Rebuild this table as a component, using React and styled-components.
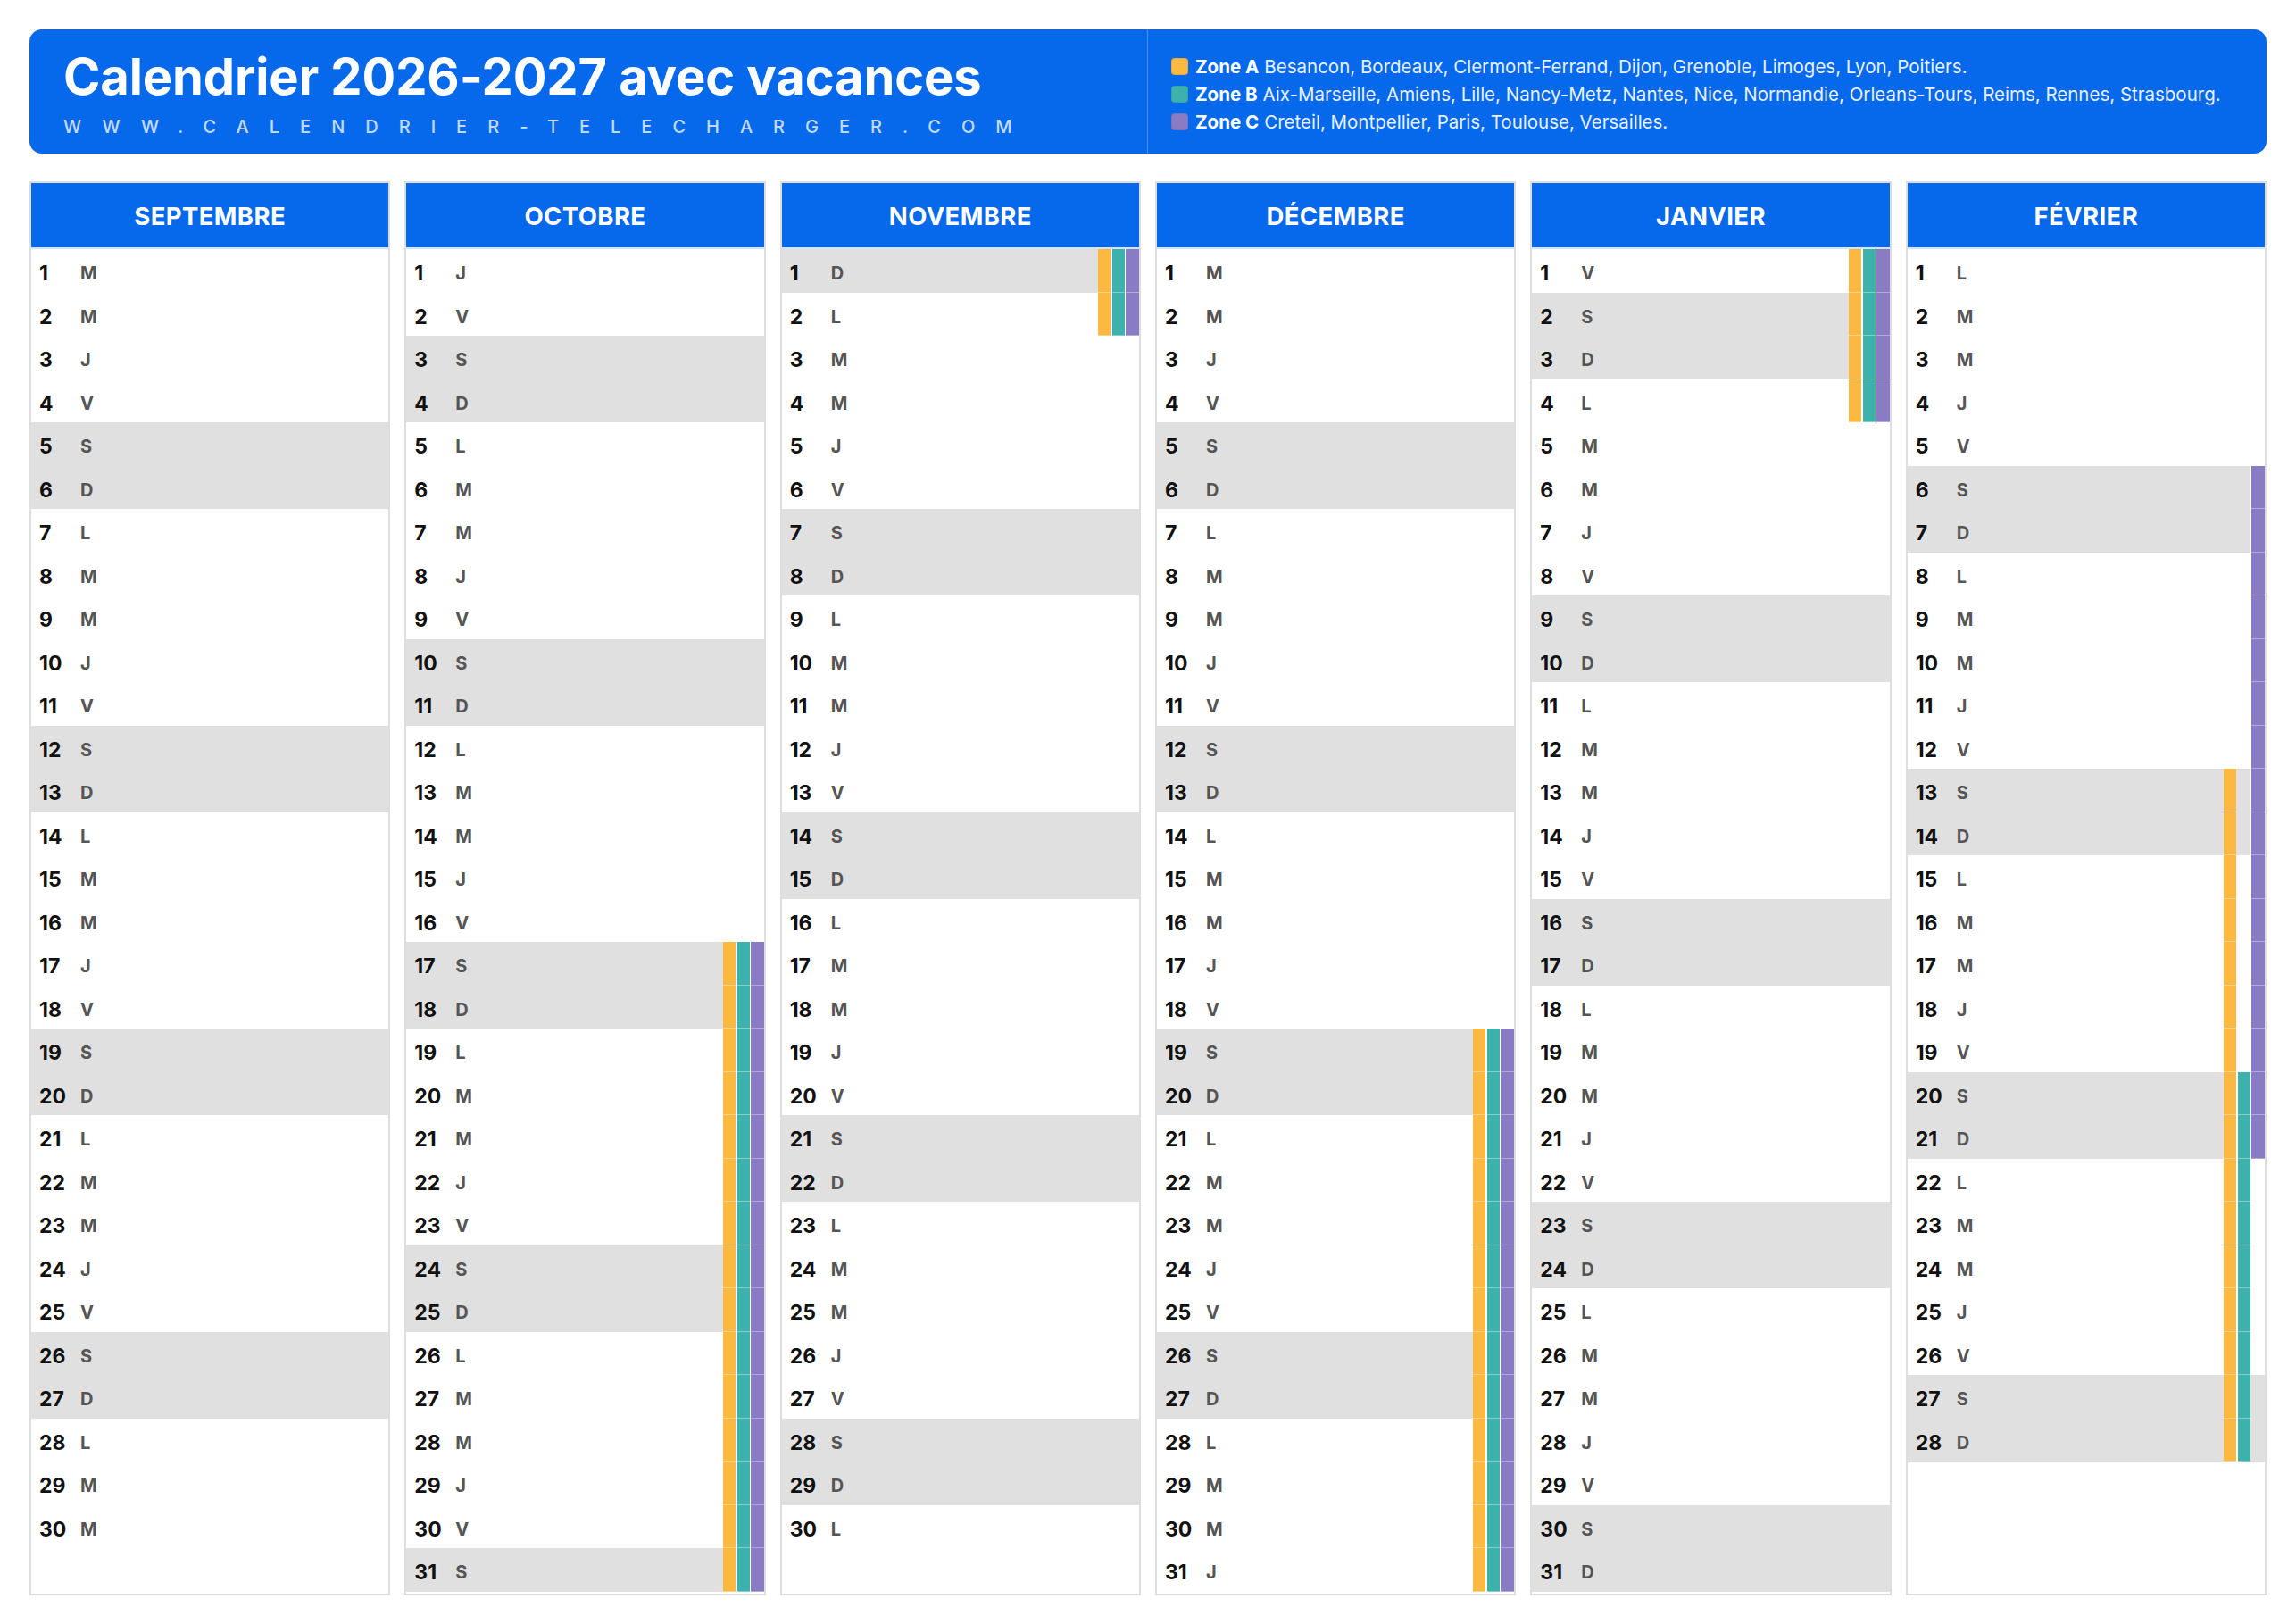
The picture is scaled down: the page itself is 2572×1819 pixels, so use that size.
import React from "react";
import styled, { createGlobalStyle } from "styled-components";

const BLUE = "#0669eb";

const ZONES = [
  {
    key: "A",
    color: "#fbb941",
    width: 14,
    gap: 0,
    cities: "Besancon, Bordeaux, Clermont-Ferrand, Dijon, Grenoble, Limoges, Lyon, Poitiers.",
  },
  {
    key: "B",
    color: "#3db2ac",
    width: 16,
    gap: 2,
    cities:
      "Aix-Marseille, Amiens, Lille, Nancy-Metz, Nantes, Nice, Normandie, Orleans-Tours, Reims, Rennes, Strasbourg.",
  },
  {
    key: "C",
    color: "#8a7bc5",
    width: 16,
    gap: 1,
    cities: "Creteil, Montpellier, Paris, Toulouse, Versailles.",
  },
];

// vacances scolaires, dates incluses
const HOLIDAYS = {
  A: [
    ["2026-10-17", "2026-11-02"],
    ["2026-12-19", "2027-01-04"],
    ["2027-02-13", "2027-03-01"],
  ],
  B: [
    ["2026-10-17", "2026-11-02"],
    ["2026-12-19", "2027-01-04"],
    ["2027-02-20", "2027-03-08"],
  ],
  C: [
    ["2026-10-17", "2026-11-02"],
    ["2026-12-19", "2027-01-04"],
    ["2027-02-06", "2027-02-21"],
  ],
};

const MONTHS = [
  { name: "SEPTEMBRE", year: 2026, month: 8 },
  { name: "OCTOBRE", year: 2026, month: 9 },
  { name: "NOVEMBRE", year: 2026, month: 10 },
  { name: "DÉCEMBRE", year: 2026, month: 11 },
  { name: "JANVIER", year: 2027, month: 0 },
  { name: "FÉVRIER", year: 2027, month: 1 },
];

const LETTERS = ["D", "L", "M", "M", "J", "V", "S"];

const pad = (n) => String(n).padStart(2, "0");
const iso = (y, m, d) => `${y}-${pad(m + 1)}-${pad(d)}`;
const inHoliday = (zone, date) =>
  HOLIDAYS[zone].some(([from, to]) => date >= from && date <= to);

const GlobalStyle = createGlobalStyle`
  html, body {
    margin: 0;
    padding: 0;
    background: #fff;
  }
  body {
    font-family: Inter, "Noto Sans", "Liberation Sans", sans-serif;
    -webkit-font-smoothing: antialiased;
  }
  * {
    box-sizing: border-box;
  }
`;

const Page = styled.div`
  width: 2572px;
  padding: 33px 33px 0;
`;

const Header = styled.header`
  display: flex;
  height: 139px;
  background: ${BLUE};
  border-radius: 14px;
  color: #fff;
  overflow: hidden;
`;

const Brand = styled.div`
  flex: 0 0 50%;
  padding: 20px 38px 0;
  border-right: 1px solid rgba(255, 255, 255, 0.28);
`;

const Title = styled.h1`
  margin: 0;
  font-size: 56px;
  line-height: 1.2;
  font-weight: 700;
  letter-spacing: -0.1px;
  white-space: nowrap;
`;

const Site = styled.div`
  margin-top: 10px;
  font-size: 20px;
  line-height: 1.2;
  font-weight: 500;
  letter-spacing: 23px;
  color: #c4dafc;
  white-space: nowrap;
`;

const Legend = styled.div`
  flex: 1;
  display: flex;
  flex-direction: column;
  justify-content: center;
  padding: 5px 0 0 26px;
  font-size: 20.5px;
  line-height: 31px;
  color: #e8f0ff;
`;

const LegendLine = styled.div`
  display: flex;
  align-items: center;
  white-space: nowrap;
`;

const Swatch = styled.span`
  width: 19px;
  height: 19px;
  margin-right: 8px;
  border-radius: 4px;
  background: ${(p) => p.$color};
  box-shadow: inset 0 0 0 1px rgba(0, 0, 0, 0.08);
`;

const ZoneName = styled.b`
  font-weight: 700;
  color: #fff;
  margin-right: 6px;
`;

const Grid = styled.div`
  display: grid;
  grid-template-columns: repeat(6, 1fr);
  gap: 16px;
  margin-top: 31px;
`;

const Column = styled.section`
  display: flex;
  flex-direction: column;
  border: 2px solid #dedede;
  background: #fff;
`;

const MonthHead = styled.h2`
  margin: 0;
  height: 74px;
  display: flex;
  align-items: center;
  justify-content: center;
  padding-top: 2px;
  background: ${BLUE};
  border-bottom: 2px solid #d8e4f5;
  color: #fff;
  font-size: 27.5px;
  font-weight: 700;
  letter-spacing: 0.4px;
`;

const Days = styled.div`
  padding-bottom: 2px;
`;

const Row = styled.div`
  display: flex;
  height: 48.5px;
  background: ${(p) => (p.$weekend ? "#e0e0e0" : "#fff")};
`;

const Num = styled.span`
  width: 55px;
  padding: 6px 0 0 9px;
  display: flex;
  align-items: center;
  font-size: 23px;
  font-weight: 700;
  color: #111;
`;

const Letter = styled.span`
  flex: 1;
  padding-top: 6px;
  display: flex;
  align-items: center;
  font-size: 20px;
  font-weight: 700;
  color: #555;
`;

const Bars = styled.div`
  display: flex;
`;

const Bar = styled.span`
  width: ${(p) => p.$width}px;
  border-left: ${(p) => (p.$color ? `${p.$gap}px solid #fff` : "none")};
  background: ${(p) => p.$color || "transparent"};
  box-shadow: ${(p) =>
    p.$color ? "inset 0 -1px 0 rgba(255, 255, 255, 0.35)" : "none"};
`;

const Month = ({ name, year, month }) => {
  const count = new Date(year, month + 1, 0).getDate();
  const days = Array.from({ length: count }, (_, i) => i + 1);

  return (
    <Column>
      <MonthHead>{name}</MonthHead>
      <Days>
        {days.map((d) => {
          const dow = new Date(year, month, d).getDay();
          const date = iso(year, month, d);
          return (
            <Row key={d} $weekend={dow === 0 || dow === 6}>
              <Num>{d}</Num>
              <Letter>{LETTERS[dow]}</Letter>
              <Bars>
                {ZONES.map((z) => (
                  <Bar
                    key={z.key}
                    $width={z.width}
                    $gap={z.gap}
                    $color={inHoliday(z.key, date) ? z.color : null}
                  />
                ))}
              </Bars>
            </Row>
          );
        })}
      </Days>
    </Column>
  );
};

export default function App() {
  return (
    <>
      <GlobalStyle />
      <Page>
        <Header>
          <Brand>
            <Title>Calendrier 2026-2027 avec vacances</Title>
            <Site>WWW.CALENDRIER-TELECHARGER.COM</Site>
          </Brand>
          <Legend>
            {ZONES.map((z) => (
              <LegendLine key={z.key}>
                <Swatch $color={z.color} />
                <ZoneName>Zone {z.key}</ZoneName>
                {z.cities}
              </LegendLine>
            ))}
          </Legend>
        </Header>
        <Grid>
          {MONTHS.map((m) => (
            <Month key={m.name} {...m} />
          ))}
        </Grid>
      </Page>
    </>
  );
}
